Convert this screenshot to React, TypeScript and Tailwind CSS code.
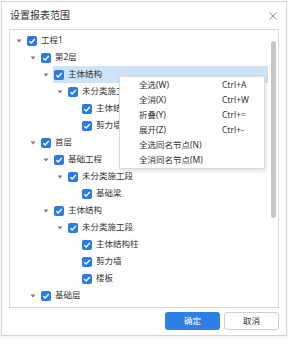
import React from "react";

type Node = { label: string; level: number; arrow: boolean; active?: boolean };

const rows: Node[] = [
  { label: "工程1", level: 0, arrow: true },
  { label: "第2层", level: 1, arrow: true },
  { label: "主体结构", level: 2, arrow: true, active: true },
  { label: "未分类施工段", level: 3, arrow: true },
  { label: "主体结构柱", level: 4, arrow: false },
  { label: "剪力墙", level: 4, arrow: false },
  { label: "首层", level: 1, arrow: true },
  { label: "基础工程", level: 2, arrow: true },
  { label: "未分类施工段", level: 3, arrow: true },
  { label: "基础梁", level: 4, arrow: false },
  { label: "主体结构", level: 2, arrow: true },
  { label: "未分类施工段", level: 3, arrow: true },
  { label: "主体结构柱", level: 4, arrow: false },
  { label: "剪力墙", level: 4, arrow: false },
  { label: "楼板", level: 4, arrow: false },
  { label: "基础层", level: 1, arrow: true },
];

// indent per level, written out so tailwind picks them up
const indent = ["pl-[3px]", "pl-[17px]", "pl-[30px]", "pl-[44px]", "pl-[58px]"];

const menu = [
  { label: "全选(W)", key: "Ctrl+A" },
  { label: "全消(X)", key: "Ctrl+W" },
  { label: "折叠(Y)", key: "Ctrl+=" },
  { label: "展开(Z)", key: "Ctrl+-" },
  { label: "全选同名节点(N)", key: "" },
  { label: "全消同名节点(M)", key: "" },
];

function Check() {
  return (
    <span className="flex h-[10px] w-[10px] shrink-0 items-center justify-center rounded-[2px] bg-[#2b7be4]">
      <svg width="8" height="8" viewBox="0 0 8 8">
        <path d="M1.3 4.2 L3.2 6 L6.8 2" fill="none" stroke="#fff" strokeWidth="1.4" />
      </svg>
    </span>
  );
}

function Row({ node }: { node: Node }) {
  return (
    <div className={`flex h-[17px] items-center ${indent[node.level]}`}>
      <span className="flex w-[12px] shrink-0 items-center justify-center">
        {node.arrow && (
          <svg width="6" height="4" viewBox="0 0 6 4">
            <path d="M0.5 0.5 L5.5 0.5 L3 3.5 Z" fill="#7a7a7a" />
          </svg>
        )}
      </span>
      <div
        className={`ml-[1px] flex h-full flex-1 items-center pl-[1px] ${
          node.active ? "bg-[#cce3f8]" : ""
        }`}
      >
        <Check />
        <span className="ml-[4px] whitespace-nowrap text-[8.5px] text-[#333]">{node.label}</span>
      </div>
    </div>
  );
}

export default function App() {
  return (
    <div
      className="relative h-[341px] w-[290px] bg-white pl-[1px] pt-[1px]"
      style={{ fontFamily: '"Noto Sans", "Noto Sans CJK SC", sans-serif' }}
    >
      <div className="flex h-[335px] w-[286px] flex-col border border-[#d4d4d4] bg-white shadow-[0_1px_3px_rgba(0,0,0,0.08)]">
        {/* header */}
        <div className="flex h-[27px] shrink-0 items-center justify-between pl-[8px] pr-[8px]">
          <span className="text-[10px] text-[#333]">设置报表范围</span>
          <svg width="8" height="8" viewBox="0 0 8 8" className="mr-[1px]">
            <path d="M0.5 0.5 L7.5 7.5 M7.5 0.5 L0.5 7.5" stroke="#8a8a8a" strokeWidth="0.9" />
          </svg>
        </div>

        {/* tree panel */}
        <div className="relative mx-[7px] flex h-[279px] shrink-0 border border-[#d9d9d9]">
          <div className="flex-1 pt-[2px] pr-[1px]">
            {rows.map((n, i) => (
              <Row key={i} node={n} />
            ))}
          </div>
          <div className="w-[9px] shrink-0 pt-[11px] pl-[2px]">
            <div className="h-[177px] w-[5px] rounded-full bg-[#c6c6c6]" />
          </div>

          {/* context menu */}
          <div className="absolute left-[109px] top-[46px] w-[146px] border border-[#dadada] bg-white pt-[1px] shadow-[1px_2px_4px_rgba(0,0,0,0.12)]">
            {menu.map((m) => (
              <div key={m.label} className="flex h-[15px] items-center text-[8.5px] text-[#333]">
                <span className="w-[102px] whitespace-nowrap pl-[19px]">{m.label}</span>
                <span className="whitespace-nowrap">{m.key}</span>
              </div>
            ))}
          </div>
        </div>

        {/* footer */}
        <div className="mt-[4px] flex justify-end gap-[4px] pr-[7px]">
          <button className="flex h-[18px] w-[55px] items-center justify-center rounded-[3px] bg-[#2e7fe6] text-[8.5px] text-white">
            确定
          </button>
          <button className="flex h-[18px] w-[55px] items-center justify-center rounded-[3px] border border-[#d0d0d0] bg-white text-[8.5px] text-[#333]">
            取消
          </button>
        </div>
      </div>
    </div>
  );
}
